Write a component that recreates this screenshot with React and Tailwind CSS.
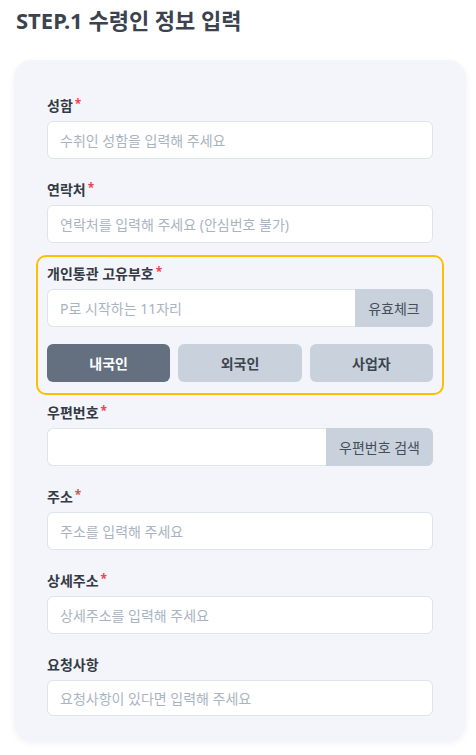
import React from "react";

const FONT = { fontFamily: '"Noto Sans", "Noto Sans CJK KR", sans-serif' };

const Label = ({ text, required }) => (
  <div className="h-[20px] mb-[5px] flex items-center text-[14px] font-bold leading-[20px] text-[#333a44]">
    {text}
    {required && <span className="ml-[2px] text-[12px] text-[#e5484d] -mt-[4px]">*</span>}
  </div>
);

const Input = ({ placeholder, h = "h-[38px]" }) => (
  <input
    placeholder={placeholder}
    className={`w-full ${h} rounded-[6px] border border-[#dfe3ea] bg-white px-[12px] text-[14px] text-[#333] placeholder:text-[#a9b4c2] outline-none`}
    style={FONT}
  />
);

const InputWithButton = ({ placeholder = "", button, btnW }) => (
  <div className="flex h-[38px] w-full">
    <input
      placeholder={placeholder}
      className="min-w-0 flex-1 rounded-l-[6px] border border-r-0 border-[#dfe3ea] bg-white px-[12px] text-[14px] placeholder:text-[#a9b4c2] outline-none"
      style={FONT}
    />
    <button
      className={`${btnW} rounded-r-[6px] bg-[#c9d2dc] text-[14px] text-[#454d58]`}
      style={FONT}
    >
      {button}
    </button>
  </div>
);

export default function App() {
  return (
    <div className="min-h-screen bg-white pb-[15px]" style={FONT}>
      <h1 className="pl-[16px] pt-[5px] text-[22px] font-bold leading-[30px] text-[#3b434e]">
        STEP.1 수령인 정보 입력
      </h1>

      <div className="ml-[14px] mt-[25px] w-[452px] rounded-[18px] bg-[#f4f5fa] px-[33px] pt-[36px] pb-[25px] shadow-[0_2px_6px_rgba(0,0,0,0.06)]">
        {/* 성함 */}
        <div>
          <Label text="성함" required />
          <Input placeholder="수취인 성함을 입력해 주세요" />
        </div>

        {/* 연락처 */}
        <div className="mt-[21px]">
          <Label text="연락처" required />
          <Input placeholder="연락처를 입력해 주세요 (안심번호 불가)" />
        </div>

        {/* 개인통관 고유부호 */}
        <div className="-mx-[11px] mt-[12px] rounded-[10px] border-2 border-[#ffbf00] px-[9px] pt-[7px] pb-[11px]">
          <Label text="개인통관 고유부호" required />
          <InputWithButton placeholder="P로 시작하는 11자리" button="유효체크" btnW="w-[78px]" />
          <div className="mt-[17px] grid grid-cols-3 gap-[8px]">
            <button className="h-[38px] rounded-[6px] bg-[#647080] text-[14px] font-bold text-white">
              내국인
            </button>
            <button className="h-[38px] rounded-[6px] bg-[#c9d2dc] text-[14px] font-bold text-[#3c4450]">
              외국인
            </button>
            <button className="h-[38px] rounded-[6px] bg-[#c9d2dc] text-[14px] font-bold text-[#3c4450]">
              사업자
            </button>
          </div>
        </div>

        {/* 우편번호 */}
        <div className="mt-[8px]">
          <Label text="우편번호" required />
          <InputWithButton button="우편번호 검색" btnW="w-[107px]" />
        </div>

        {/* 주소 */}
        <div className="mt-[21px]">
          <Label text="주소" required />
          <Input placeholder="주소를 입력해 주세요" />
        </div>

        {/* 상세주소 */}
        <div className="mt-[21px]">
          <Label text="상세주소" required />
          <Input placeholder="상세주소를 입력해 주세요" />
        </div>

        {/* 요청사항 */}
        <div className="mt-[21px]">
          <Label text="요청사항" />
          <Input placeholder="요청사항이 있다면 입력해 주세요" h="h-[36px]" />
        </div>
      </div>
    </div>
  );
}
